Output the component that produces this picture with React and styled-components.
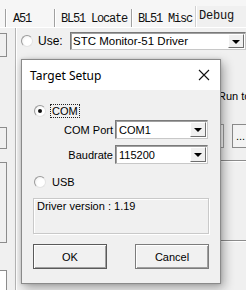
import React from "react";
import styled, { createGlobalStyle, css } from "styled-components";

const GlobalStyle = createGlobalStyle`
  html, body { margin: 0; padding: 0; background: #f0f0f0; }
  body { font-family: "Liberation Sans", Arial, sans-serif; font-size: 11px; color: #000; }
`;

const Screen = styled.div`
  position: relative;
  width: 246px;
  height: 290px;
  overflow: hidden;
  background: #f0f0f0;
  display: flex;
  flex-direction: column;
`;

/* ---------- background window (tabs + debug page) ---------- */

const TabBar = styled.div`
  height: 28px;
  box-sizing: border-box;
  padding: 10px 0 0 5px;
  display: flex;
  align-items: flex-end;
  background: #f6f6f6;
  border-bottom: 1px solid #fff;
`;

const Tab = styled.div`
  height: 18px;
  width: ${p => p.$w}px;
  box-sizing: border-box;
  padding: 4px 0 0 ${p => p.$pad || 6}px;
  border-left: 1px solid #a0a0a0;
  box-shadow: inset 1px 0 0 #fff;
  font-family: "Liberation Mono", "Courier New", monospace;
  font-size: 12px;
  letter-spacing: -1.2px;
  line-height: 12px;
  color: #111;
  white-space: nowrap;
  ${p => p.$active && css`
    height: 21px;
    padding-top: 4px;
    background: #f0f0f0;
    letter-spacing: -0.2px;
    border-left-color: #d0d0d0;
  `}
`;

const Content = styled.div`
  flex: 1;
  display: flex;
`;

const LeftRail = styled.div`
  width: 8px;
  display: flex;
  flex-direction: column;
`;

const RailBox = styled.div`
  height: ${p => p.$h}px;
  margin-top: ${p => p.$top}px;
  box-sizing: border-box;
  border: 1px solid #8c8c8c;
  border-left: none;
  background: ${p => (p.$white ? "#fff" : "#f0f0f0")};
  flex: none;
`;

const Main = styled.div`
  flex: 1;
  margin-left: 8px;
  border-left: 1px solid #b4b4b4;
  box-shadow: inset 1px 0 0 #fff;
  display: flex;
  flex-direction: column;
`;

const UseRow = styled.div`
  height: 18px;
  margin-top: 4px;
  padding-left: 5px;
  display: flex;
  align-items: center;
`;

const UseLabel = styled.span`
  margin-left: 5px;
  width: 32px;
  font-size: 12px;
`;

const Lower = styled.div`
  flex: 1;
  display: flex;
`;

const LowerLeft = styled.div`
  flex: 1;
  display: flex;
  flex-direction: column;
`;

const OutputBox = styled.div`
  margin: auto 0 0 8px;
  width: 86px;
  height: 9px;
  box-sizing: border-box;
  border: 1px solid #7a7a7a;
  border-bottom: none;
  background: #fff;
`;

const RightCol = styled.div`
  width: 28px;
  overflow: hidden;
  display: flex;
  flex-direction: column;
`;

const RunTo = styled.div`
  margin-top: 40px;
  white-space: nowrap;
  font-size: 11px;
`;

const BrowseRow = styled.div`
  margin-top: 22px;
  height: 24px;
  display: flex;
  gap: 8px;
`;

const EditEdge = styled.div`
  width: 6px;
  box-sizing: border-box;
  border: 1px solid #a0a0a0;
  border-left: none;
  background: #fff;
`;

const DotsButton = styled.div`
  flex: 1;
  box-sizing: border-box;
  border: 1px solid #8a8a8a;
  border-right: none;
  background: #f3f3f3;
  padding: 6px 0 0 3px;
  font-size: 11px;
  line-height: 10px;
`;

const HLine = styled.div`
  margin-top: ${p => p.$top}px;
  height: 1px;
  background: #8c8c8c;
  box-shadow: 0 1px 0 #fff;
`;

/* ---------- shared controls ---------- */

const Radio = styled.span`
  position: relative;
  flex: none;
  width: 12px;
  height: 12px;
  box-sizing: border-box;
  border-radius: 50%;
  border: 1px solid #9a9a9a;
  border-right-color: #e4e4e4;
  border-bottom-color: #e4e4e4;
  background: radial-gradient(circle at 60% 60%, #fff 40%, #e8e8e8 100%);
  ${p => p.$checked && css`
    &::after {
      content: "";
      position: absolute;
      left: 3px;
      top: 3px;
      width: 4px;
      height: 4px;
      border-radius: 50%;
      background: #111;
    }
  `}
`;

const Select = styled.div`
  width: ${p => p.$w}px;
  height: ${p => p.$h || 19}px;
  box-sizing: border-box;
  display: flex;
  align-items: stretch;
  background: #fff;
  border: 1px solid #7a7a7a;
  border-right-color: #c8c8c8;
  border-bottom-color: #c8c8c8;
  box-shadow: inset 1px 1px 0 #a0a0a0;
`;

const SelectText = styled.span`
  flex: 1;
  padding-left: ${p => p.$pad || 3}px;
  display: flex;
  align-items: center;
  font-size: ${p => p.$size || 11}px;
  white-space: nowrap;
  overflow: hidden;
`;

const DropButton = styled.span`
  width: 16px;
  margin: 1px 1px 1px 0;
  box-sizing: border-box;
  display: flex;
  align-items: center;
  justify-content: center;
  background: #f0f0f0;
  border: 1px solid #fff;
  border-right-color: #6e6e6e;
  border-bottom-color: #6e6e6e;

  &::before {
    content: "";
    border-left: 4px solid transparent;
    border-right: 4px solid transparent;
    border-top: 4px solid #000;
    margin-top: 1px;
  }
`;

/* ---------- Target Setup dialog ---------- */

const Dialog = styled.div`
  position: absolute;
  left: 21px;
  top: 59px;
  width: 200px;
  height: 225px;
  box-sizing: border-box;
  border: 1px solid #8a8a8a;
  background: #f0f0f0;
  box-shadow: 3px 4px 10px rgba(0, 0, 0, 0.32), 0 0 3px rgba(0, 0, 0, 0.15);
  display: flex;
  flex-direction: column;
`;

const TitleBar = styled.div`
  height: 30px;
  flex: none;
  background: #fff;
  display: flex;
  align-items: center;
  padding: 0 10px 0 8px;
  font-family: "Noto Sans", "Open Sans", sans-serif;
  font-size: 12px;
  color: #000;
`;

const TitleText = styled.span`
  flex: 1;
`;

const DialogBody = styled.div`
  flex: 1;
  padding: 14px 11px 13px 11px;
  display: flex;
  flex-direction: column;
`;

const RadioRow = styled.div`
  height: 14px;
  margin-top: ${p => p.$top || 0}px;
  display: flex;
  align-items: center;
  padding-left: 1px;
`;

const RadioLabel = styled.span`
  margin-left: 4px;
  padding: 0 1px;
  line-height: 12px;
  border: 1px ${p => (p.$focus ? "dotted #222" : "solid transparent")};
`;

const FieldRow = styled.div`
  margin-top: ${p => p.$top}px;
  display: flex;
  align-items: center;
`;

const FieldLabel = styled.span`
  width: 80px;
  text-align: right;
  margin-right: 2px;
`;

const InfoBox = styled.div`
  margin-top: 9px;
  height: 36px;
  box-sizing: border-box;
  border: 1px solid #c9c9c9;
  box-shadow: inset 1px 1px 0 #fff, 1px 1px 0 #fff;
  padding: 1px 3px;
  line-height: 12px;
`;

const ButtonRow = styled.div`
  margin-top: 10px;
  display: flex;
  justify-content: space-between;
`;

const Button = styled.div`
  width: 74px;
  height: 25px;
  box-sizing: border-box;
  display: flex;
  align-items: center;
  justify-content: center;
  background: #f1f1f1;
  border: 1px solid ${p => (p.$default ? "#5a5a5a" : "#7c7c7c")};
  box-shadow: inset 1px 1px 0 #fff, inset -1px -1px 0 #a0a0a0;
  font-size: 11px;
`;

const CloseIcon = () => (
  <svg width="12" height="12" viewBox="0 0 12 12">
    <path d="M1 1 L11 11 M11 1 L1 11" stroke="#111" strokeWidth="1.1" fill="none" />
  </svg>
);

export default function App() {
  return (
    <>
      <GlobalStyle />
      <Screen>
        <TabBar>
          <Tab $w={49} $pad={7}>A51</Tab>
          <Tab $w={77}>BL51 Locate</Tab>
          <Tab $w={64} $pad={6}>BL51 Misc</Tab>
          <Tab $w={51} $pad={3} $active>Debug</Tab>
        </TabBar>
        <Content>
          <LeftRail>
            <RailBox $top={5} $h={24} />
            <RailBox $top={70} $h={22} />
            <RailBox $top={13} $h={81} />
            <RailBox $top={27} $h={30} $white />
          </LeftRail>
          <Main>
            <UseRow>
              <Radio />
              <UseLabel>Use:</UseLabel>
              <Select $w={176} $h={18}>
                <SelectText $size={11.5} $pad={2}>STC Monitor-51 Driver</SelectText>
                <DropButton />
              </Select>
            </UseRow>
            <Lower>
              <LowerLeft>
                <OutputBox />
              </LowerLeft>
              <RightCol>
                <RunTo>Run to</RunTo>
                <BrowseRow>
                  <EditEdge />
                  <DotsButton>...</DotsButton>
                </BrowseRow>
                <HLine $top={12} />
                <HLine $top={79} />
              </RightCol>
            </Lower>
          </Main>
        </Content>

        <Dialog>
          <TitleBar>
            <TitleText>Target Setup</TitleText>
            <CloseIcon />
          </TitleBar>
          <DialogBody>
            <RadioRow>
              <Radio $checked />
              <RadioLabel $focus>COM</RadioLabel>
            </RadioRow>
            <FieldRow $top={2}>
              <FieldLabel>COM Port</FieldLabel>
              <Select $w={93}>
                <SelectText>COM1</SelectText>
                <DropButton />
              </Select>
            </FieldRow>
            <FieldRow $top={6}>
              <FieldLabel>Baudrate</FieldLabel>
              <Select $w={93}>
                <SelectText>115200</SelectText>
                <DropButton />
              </Select>
            </FieldRow>
            <RadioRow $top={11}>
              <Radio />
              <RadioLabel>USB</RadioLabel>
            </RadioRow>
            <InfoBox>Driver version : 1.19</InfoBox>
            <ButtonRow>
              <Button $default>OK</Button>
              <Button>Cancel</Button>
            </ButtonRow>
          </DialogBody>
        </Dialog>
      </Screen>
    </>
  );
}
